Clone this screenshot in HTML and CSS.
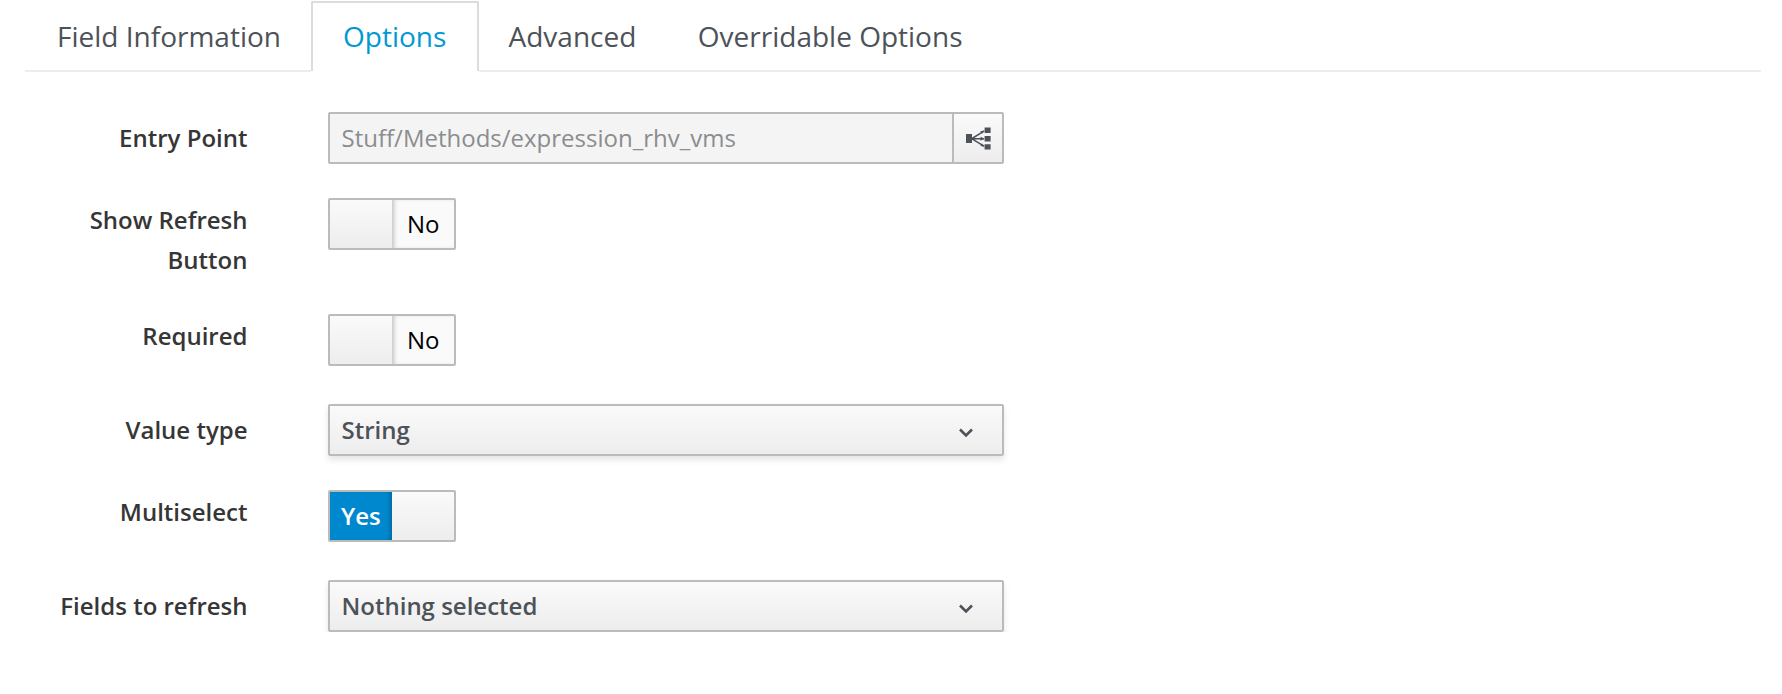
FILE: index.html
```html
<!DOCTYPE html>
<html lang="en">
<head>
<meta charset="utf-8">
<title>Field Options</title>
<link rel="stylesheet" href="styles.css">
</head>
<body>
<nav class="tabs">
  <a class="tab tab-first">Field Information</a>
  <a class="tab active">Options</a>
  <a class="tab">Advanced</a>
  <a class="tab">Overridable Options</a>
</nav>
<form class="form">
  <div class="row">
    <label class="label">Entry Point</label>
    <div class="input-group">
      <div class="input">Stuff/Methods/expression_rhv_vms</div>
      <div class="addon">
        <svg width="26" height="24" viewBox="0 0 26 24" fill="#4d5258">
          <path d="M0 8h6v9H0zM18.600 1.500h6v5.500h-6zM18.600 10h6v5.500h-6zM18.600 18.300h6v5.200h-6z"/>
          <path d="M6 12.500 18 5.200M6 12.700h12M6 12.900l12 7.300" fill="none" stroke="#4d5258" stroke-width="1.500"/>
          <path d="M18.600 4.600 16 7.800 14.300 5.200zM18.600 12.700l-4.100 2v-4zM18.600 20.800l-4.200-.8 1.600-2.500z"/>
        </svg>
      </div>
    </div>
  </div>
  <div class="row row-switch">
    <label class="label">Show Refresh Button</label>
    <div class="switch off"><span class="handle"></span><span class="state">No</span></div>
  </div>
  <div class="row row-switch">
    <label class="label">Required</label>
    <div class="switch off"><span class="handle"></span><span class="state">No</span></div>
  </div>
  <div class="row">
    <label class="label">Value type</label>
    <div class="select"><span>String</span>
      <svg class="chevron" width="14" height="10" viewBox="0 0 14 10"><path d="M1 1.500 7 7.500 13 1.500"/></svg>
    </div>
  </div>
  <div class="row row-switch">
    <label class="label">Multiselect</label>
    <div class="switch on"><span class="state">Yes</span><span class="handle"></span></div>
  </div>
  <div class="row">
    <label class="label">Fields to refresh</label>
    <div class="select"><span>Nothing selected</span>
      <svg class="chevron" width="14" height="10" viewBox="0 0 14 10"><path d="M1 1.500 7 7.500 13 1.500"/></svg>
    </div>
  </div>
</form>
</body>
</html>
```
FILE: styles.css
```css
* { box-sizing: border-box; }
body {
  margin: 0;
  padding: 1px 21px 0 25px;
  background: #fff;
  color: #363636;
  font: 24px/40px "Open Sans", sans-serif;
}
.tabs {
  display: flex;
  height: 71px;
  box-shadow: inset 0 -2px #ededed;
}
.tab {
  height: 71px;
  padding: 12px 32px 0 29.5px;
  color: #4d5258;
  font-size: 28px;
  line-height: 47px;
  white-space: nowrap;
}
.tab-first { width: 286px; padding-left: 32px; padding-right: 0; }
.tab.active {
  width: 168px;
  height: 70px;
  padding: 10px 0 0 30px;
  border: 2px solid #dcdcdc;
  border-bottom: 0;
  border-radius: 2px 2px 0 0;
  background: #fff;
  box-shadow: 0 1px #fff;
  color: #0099d3;
}
.form {
  display: flex;
  flex-direction: column;
  gap: 34px;
  margin-top: 40px;
}
.row {
  display: grid;
  grid-template-columns: 222.5px 676px;
  column-gap: 80.5px;
  align-items: start;
}
.row-switch { min-height: 56px; }
.label {
  padding: 6px 0 0 30px;
  font-weight: 600;
  text-align: right;
}
.row-switch .label { padding-top: 2px; }
.input-group, .select, .switch {
  display: flex;
  height: 52px;
  border: 2px solid #bbb;
  border-radius: 2px;
}
.input {
  flex: 1;
  padding: 4px 11.5px;
  background: #f4f4f4;
  color: #8b8d8f;
}
.addon {
  display: flex;
  width: 50px;
  padding: 12px 0 0 12px;
  border-left: 2px solid #bbb;
  background: linear-gradient(#fafafa, #ededed);
}
.select {
  align-items: center;
  justify-content: space-between;
  padding: 0 29px 0 11.5px;
  background: linear-gradient(#fafafa, #ededed);
  box-shadow: 0 4px 6px rgba(3, 3, 3, .1);
  color: #4d5258;
  font-weight: 600;
}
.chevron {
  margin-top: 5px;
  fill: none;
  stroke: #4d5258;
  stroke-width: 2.600;
}
.switch { width: 128px; }
.switch span { width: 62px; height: 48px; }
.switch .handle { background: linear-gradient(#fafafa, #ededed); }
.state { padding-top: 4px; }
.off .state {
  padding-left: 15px;
  background: #fafafa;
  box-shadow: inset 4px 0 4px -2px rgba(0, 0, 0, .22);
  color: #000;
}
.on .state {
  padding-left: 11px;
  background: #0088ce;
  box-shadow: inset -4px 0 4px -2px rgba(0, 0, 0, .25);
  color: #fff;
  font-weight: 600;
}
```
